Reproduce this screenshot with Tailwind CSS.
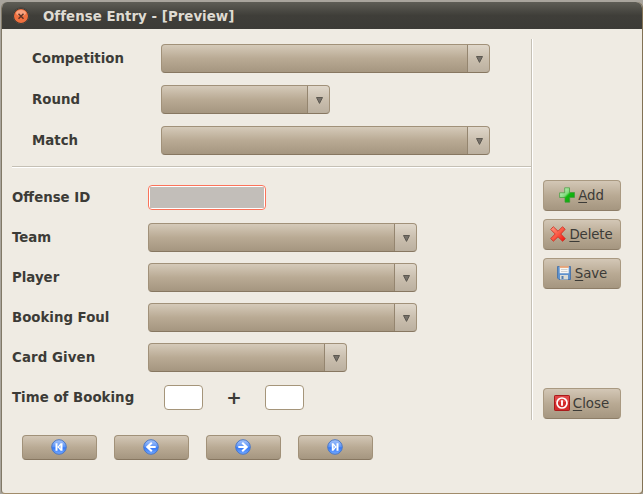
<!DOCTYPE html>
<html lang="en">
<head>
<meta charset="utf-8">
<title>Offense Entry</title>
<script src="https://cdn.jsdelivr.net/npm/@tailwindcss/browser@4"></script>
</head>
<body class="w-[643px] h-[494px] overflow-hidden bg-[#a9a59d] font-['DejaVu_Sans',sans-serif] text-[13.333px] text-[#3c3b37]">
<svg class="absolute w-0 h-0">
  <defs>
    <linearGradient id="blue" x1="0" y1="0" x2="0" y2="1"><stop offset="0" stop-color="#a8c5fa"/><stop offset=".5" stop-color="#5a93f8"/><stop offset=".55" stop-color="#3478f8"/><stop offset="1" stop-color="#75aaff"/></linearGradient>
    <linearGradient id="green" x1="0" y1="0" x2="1" y2="1"><stop offset="0" stop-color="#e4f8df"/><stop offset=".45" stop-color="#7fd97a"/><stop offset=".55" stop-color="#12b80f"/><stop offset="1" stop-color="#10a010"/></linearGradient>
    <linearGradient id="red" x1="0" y1="0" x2="1" y2="1"><stop offset="0" stop-color="#ff9b85"/><stop offset=".5" stop-color="#fb5a45"/><stop offset="1" stop-color="#f50b08"/></linearGradient>
    <symbol id="tri" viewBox="0 0 7 7"><path d="M.5.5h6L3.5 6.4z" fill="#77716a" stroke="#5d5951" stroke-width="1"/></symbol>
    <symbol id="disc" viewBox="0 0 16 16"><circle cx="8" cy="8" r="7.3" fill="url(#blue)" stroke="#4c78c4" stroke-width="1"/></symbol>
  </defs>
</svg>
<div class="w-[643px] h-[494px] pt-[2px] pl-px">
<div class="w-[641px] h-[492px] border-l border-b border-l-[#817967] border-b-[#a18c6b] rounded-t-[6px] rounded-b-[4px] bg-[#efebe3] overflow-hidden shadow-[1px_0_0_#827254]">
  <header class="flex items-center h-[27px] pl-[10px] bg-linear-to-b from-[#5f5e56] via-[#3f3e39] via-50% to-[#3c3b37]">
    <svg class="w-[18px] h-[18px]" viewBox="0 0 18 18"><circle cx="9" cy="9" r="8.5" fill="#33312d"/><circle cx="9" cy="9" r="8" fill="none" stroke="#57524b" stroke-width=".8"/><circle cx="9" cy="9" r="7" fill="#f0703f"/><ellipse cx="9" cy="6" rx="5" ry="3" fill="#f9a27e"/><path d="M6.5 6.7l5 5M11.5 6.7l-5 5" stroke="#603427" stroke-width="1.5"/></svg>
    <h1 class="ml-[13px] text-[13.333px] leading-[16px] font-bold text-[#dfdbd2] whitespace-nowrap mt-[3px] tracking-[.04px]">Offense Entry - [Preview]</h1>
  </header>
  <main class="flex h-[464px] pt-[10px] pl-[10px]">
    <div class="w-[519px] shrink-0">
      <section class="flex flex-col gap-[12px] h-[127px] pt-[5px] pl-[20px] font-bold">
        <div class="flex h-[29px] items-center"><span class="w-[129px]">Competition</span><button class="flex w-[329px] h-[29px] rounded-[4px] border border-[#a19179] border-b-[#877761] bg-linear-to-b from-[#d5cab9] via-[#b9aa94] via-50% to-[#a59680] overflow-hidden"><i class="ml-auto flex w-[22px] h-full border-l border-[#94856f] bg-white/25 items-center justify-center pl-[2px] pt-[2px]"><svg class="w-[7px] h-[7px]"><use href="#tri"/></svg></i></button></div>
        <div class="flex h-[29px] items-center"><span class="w-[129px]">Round</span><button class="flex w-[169px] h-[29px] rounded-[4px] border border-[#a19179] border-b-[#877761] bg-linear-to-b from-[#d5cab9] via-[#b9aa94] via-50% to-[#a59680] overflow-hidden"><i class="ml-auto flex w-[22px] h-full border-l border-[#94856f] bg-white/25 items-center justify-center pl-[2px] pt-[2px]"><svg class="w-[7px] h-[7px]"><use href="#tri"/></svg></i></button></div>
        <div class="flex h-[29px] items-center"><span class="w-[129px]">Match</span><button class="flex w-[329px] h-[29px] rounded-[4px] border border-[#a19179] border-b-[#877761] bg-linear-to-b from-[#d5cab9] via-[#b9aa94] via-50% to-[#a59680] overflow-hidden"><i class="ml-auto flex w-[22px] h-full border-l border-[#94856f] bg-white/25 items-center justify-center pl-[2px] pt-[2px]"><svg class="w-[7px] h-[7px]"><use href="#tri"/></svg></i></button></div>
      </section>
      <div class="h-[2px] bg-white border-t border-[#c5c0b5]"></div>
      <section class="pt-[15px] font-bold">
        <div class="flex h-[29px] mb-[11px] items-center"><span class="w-[136px]">Offense ID</span><div class="w-[118px] h-[25px] rounded-[4px] border border-[#fa735a] bg-white p-px"><div class="h-full bg-[#c2beb9]"></div></div></div>
        <div class="flex h-[29px] mb-[11px] items-center"><span class="w-[136px]">Team</span><button class="flex w-[269px] h-[29px] rounded-[4px] border border-[#a19179] border-b-[#877761] bg-linear-to-b from-[#d5cab9] via-[#b9aa94] via-50% to-[#a59680] overflow-hidden"><i class="ml-auto flex w-[22px] h-full border-l border-[#94856f] bg-white/25 items-center justify-center pl-[2px] pt-[2px]"><svg class="w-[7px] h-[7px]"><use href="#tri"/></svg></i></button></div>
        <div class="flex h-[29px] mb-[11px] items-center"><span class="w-[136px]">Player</span><button class="flex w-[269px] h-[29px] rounded-[4px] border border-[#a19179] border-b-[#877761] bg-linear-to-b from-[#d5cab9] via-[#b9aa94] via-50% to-[#a59680] overflow-hidden"><i class="ml-auto flex w-[22px] h-full border-l border-[#94856f] bg-white/25 items-center justify-center pl-[2px] pt-[2px]"><svg class="w-[7px] h-[7px]"><use href="#tri"/></svg></i></button></div>
        <div class="flex h-[29px] mb-[11px] items-center"><span class="w-[136px]">Booking Foul</span><button class="flex w-[269px] h-[29px] rounded-[4px] border border-[#a19179] border-b-[#877761] bg-linear-to-b from-[#d5cab9] via-[#b9aa94] via-50% to-[#a59680] overflow-hidden"><i class="ml-auto flex w-[22px] h-full border-l border-[#94856f] bg-white/25 items-center justify-center pl-[2px] pt-[2px]"><svg class="w-[7px] h-[7px]"><use href="#tri"/></svg></i></button></div>
        <div class="flex h-[29px] mb-[11px] items-center"><span class="w-[136px] tracking-[.1px]">Card Given</span><button class="flex w-[199px] h-[29px] rounded-[4px] border border-[#a19179] border-b-[#877761] bg-linear-to-b from-[#d5cab9] via-[#b9aa94] via-50% to-[#a59680] overflow-hidden"><i class="ml-auto flex w-[22px] h-full border-l border-[#94856f] bg-white/25 items-center justify-center pl-[2px] pt-[2px]"><svg class="w-[7px] h-[7px]"><use href="#tri"/></svg></i></button></div>
        <div class="flex h-[29px] items-center"><span class="w-[152px] tracking-[.03px]">Time of Booking</span><div class="w-[39px] h-[25px] rounded-[4px] border border-[#a5957a] bg-white"></div><span class="w-[62px] text-center text-[18.5px] leading-[20px]">+</span><div class="w-[39px] h-[25px] rounded-[4px] border border-[#a5957a] bg-white"></div></div>
      </section>
      <nav class="flex gap-[17px] pl-[10px] mt-[23px]">
        <button class="flex w-[75px] h-[25px] pr-px pb-px items-center justify-center rounded-[4px] border border-[#a19179] border-b-[#877761] bg-linear-to-b from-[#d3c7b6] via-[#b9aa94] via-50% to-[#a59680]"><svg class="w-4 h-4" viewBox="0 0 16 16"><use href="#disc"/><path d="M4.5 4.3h2v7.4h-2zM6.4 8l3.2-3.8h1.9v7.6H9.6z" fill="#fff"/><path d="M9.4 6.3v3.4L8.2 8z" fill="#5d96f8"/></svg></button>
        <button class="flex w-[75px] h-[25px] pr-px pb-px items-center justify-center rounded-[4px] border border-[#a19179] border-b-[#877761] bg-linear-to-b from-[#d3c7b6] via-[#b9aa94] via-50% to-[#a59680]"><svg class="w-4 h-4" viewBox="0 0 16 16"><use href="#disc"/><path d="M8.8 3.8L4.3 8l4.5 4.2M4.5 8h8.2" fill="none" stroke="#fff" stroke-width="2.1"/></svg></button>
        <button class="flex w-[75px] h-[25px] pr-px pb-px items-center justify-center rounded-[4px] border border-[#a19179] border-b-[#877761] bg-linear-to-b from-[#d3c7b6] via-[#b9aa94] via-50% to-[#a59680]"><svg class="w-4 h-4" viewBox="0 0 16 16"><use href="#disc"/><path d="M7.2 3.8L11.7 8l-4.5 4.2M11.5 8H3.3" fill="none" stroke="#fff" stroke-width="2.1"/></svg></button>
        <button class="flex w-[75px] h-[25px] pr-px pb-px items-center justify-center rounded-[4px] border border-[#a19179] border-b-[#877761] bg-linear-to-b from-[#d3c7b6] via-[#b9aa94] via-50% to-[#a59680]"><svg class="w-4 h-4" viewBox="0 0 16 16"><use href="#disc"/><path d="M11.5 4.3h-2v7.4h2zM9.6 8L6.4 4.2H4.8v7.6h1.6z" fill="#fff"/><path d="M6.6 6.3v3.4L7.8 8z" fill="#5d96f8"/></svg></button>
      </nav>
    </div>
    <div class="w-[2px] shrink-0 h-[381px] bg-white border-l border-[#c5c0b5]"></div>
    <aside class="flex flex-col w-[88px] h-[380px] pl-[10px] pt-[141px] gap-[8px]">
      <button class="flex shrink-0 w-[78px] h-[31px] pr-px items-center justify-center gap-[3px] rounded-[4px] border border-[#a99981] border-b-[#8d7d67] bg-linear-to-b from-[#d3c7b6] via-[#b9aa94] via-50% to-[#a59680]"><svg class="w-4 h-4 mb-px" viewBox="0 0 16 16"><path d="M5.7.8h4.8v4.7h5v4.9h-4.8v4.8H6v-4.7H.6V5.8h5.1z" fill="url(#green)" stroke="#3d9a38" stroke-width=".7"/></svg><span class="tracking-[-.1px]"><span class="underline underline-offset-2">A</span>dd</span></button>
      <button class="flex shrink-0 w-[78px] h-[31px] pr-px items-center justify-center gap-[3px] rounded-[4px] border border-[#a99981] border-b-[#8d7d67] bg-linear-to-b from-[#d3c7b6] via-[#b9aa94] via-50% to-[#a59680]"><svg class="w-4 h-4 mb-px" viewBox="0 0 16 16"><path d="M3.3.7L8 5.2 12.5.7l2.7 2.6L10.8 8l4.5 4.7-2.7 2.6L8 10.8l-4.6 4.4-2.7-2.6L5.2 8 .7 3.4z" fill="url(#red)" stroke="#c92c20" stroke-width=".8" stroke-linejoin="round"/></svg><span class="tracking-[-.1px]"><span class="underline underline-offset-2">D</span>elete</span></button>
      <button class="flex shrink-0 w-[78px] h-[31px] pr-px items-center justify-center gap-[3px] rounded-[4px] border border-[#a99981] border-b-[#8d7d67] bg-linear-to-b from-[#d3c7b6] via-[#b9aa94] via-50% to-[#a59680]"><svg class="w-4 h-4 mb-px" viewBox="0 0 16 16"><path d="M1.5 1.5h13v13H3l-1.5-1.5z" fill="#5d91cd" stroke="#416da5" stroke-width=".8"/><path d="M3.7 1.3h9v7h-9z" fill="#f7f7f4"/><path d="M3.7 1.2h9v1.5h-9z" fill="#e8935a"/><path d="M5 4.5h6.5M5 6.5h6.5" stroke="#c4c6c6" stroke-width=".8"/><path d="M4 10h8v4.4H4z" fill="#dadbd4"/><path d="M5.5 11h2v3h-2z" fill="#547fad"/></svg><span class="tracking-[-.1px]"><span class="underline underline-offset-2">S</span>ave</span></button>
      <button class="flex shrink-0 w-[78px] h-[31px] pr-px mt-auto items-center justify-center gap-[3px] rounded-[4px] border border-[#a99981] border-b-[#8d7d67] bg-linear-to-b from-[#d3c7b6] via-[#b9aa94] via-50% to-[#a59680]"><svg class="w-4 h-4 mb-px" viewBox="0 0 16 16"><rect x=".5" y=".5" width="15" height="15" rx=".7" fill="#d42b2b" stroke="#a91b1b"/><path d="M1 1h14v6H1z" fill="#e85a5a" opacity=".6"/><circle cx="8" cy="8" r="5" fill="none" stroke="#fff" stroke-width="1.7"/><path d="M8 5.3v5.4" stroke="#fff" stroke-width="1.9"/></svg><span><span class="underline underline-offset-2">C</span>lose</span></button>
    </aside>
  </main>
</div>
</div>
</body>
</html>
